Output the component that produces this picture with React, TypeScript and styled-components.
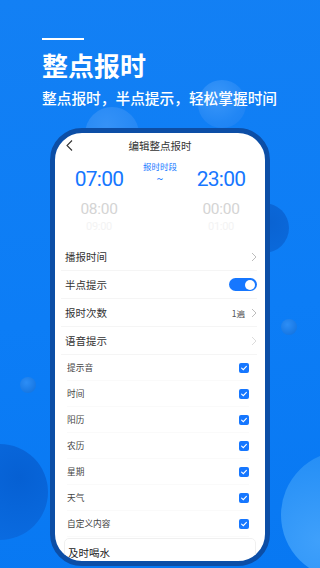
import React from 'react';
import styled, { createGlobalStyle } from 'styled-components';

const GlobalStyle = createGlobalStyle`
  html, body {
    margin: 0;
    padding: 0;
  }
  body {
    font-family: Roboto, "Noto Sans CJK SC", sans-serif;
  }
`;

const Page = styled.div`
  position: relative;
  width: 320px;
  height: 568px;
  overflow: hidden;
  background: linear-gradient(175deg, #1380f4 0%, #0c7df6 55%, #0878f2 100%);
  font-family: Roboto, "Noto Sans CJK SC", sans-serif;
`;

const Bubble = styled.div<{ $x: number; $y: number; $r: number; $tone: string }>`
  position: absolute;
  left: ${({ $x, $r }) => $x - $r}px;
  top: ${({ $y, $r }) => $y - $r}px;
  width: ${({ $r }) => $r * 2}px;
  height: ${({ $r }) => $r * 2}px;
  border-radius: 50%;
  background: ${({ $tone }) => $tone};
`;

const Intro = styled.header`
  position: relative;
  z-index: 1;
  padding: 38px 0 0 42px;
  color: #fff;
`;
const Rule = styled.div`
  width: 42px;
  height: 2px;
  background: #fff;
`;
const Headline = styled.h1`
  margin: 10px 0 0;
  font-family: "Noto Sans CJK SC", sans-serif;
  font-size: 26px;
  line-height: 30px;
  font-weight: 700;
`;
const Tagline = styled.p`
  margin: 8px 0 0;
  font-family: "Noto Sans CJK SC", sans-serif;
  font-size: 14.7px;
  line-height: 20px;
  font-weight: 500;
`;

const Phone = styled.div`
  position: relative;
  z-index: 1;
  box-sizing: border-box;
  margin: 20px 0 0 50px;
  width: 220px;
  height: 438px;
  border: 5px solid #0c4ea6;
  border-radius: 32px;
  background: #fff;
  overflow: hidden;
  display: flex;
  flex-direction: column;
`;

const NavBar = styled.div`
  display: grid;
  grid-template-columns: 30px 1fr 30px;
  align-items: center;
  height: 24px;
  flex-shrink: 0;
`;
const Back = styled.svg`
  margin-left: 11px;
`;
const NavTitle = styled.div`
  text-align: center;
  font-family: "Noto Sans CJK SC", sans-serif;
  font-size: 10.5px;
  color: #333;
`;

const Picker = styled.div`
  display: grid;
  grid-template-columns: 88px 34px 88px;
  padding-bottom: 9px;
  flex-shrink: 0;
`;
const Wheel = styled.div`
  display: flex;
  flex-direction: column;
  align-items: center;
  padding-top: 10px;
`;
const Middle = styled.div`
  display: flex;
  flex-direction: column;
  align-items: center;
  padding-top: 2px;
`;
const RangeLabel = styled.div`
  font-family: "Noto Sans CJK SC", sans-serif;
  font-size: 8.5px;
  line-height: 14px;
  color: #1677ff;
`;
const Tilde = styled.div`
  font-size: 10px;
  line-height: 12px;
  color: #1677ff;
`;
const Hour = styled.div<{ $level: 0 | 1 | 2 }>`
  font-family: Roboto, sans-serif;
  font-size: ${({ $level }) => ($level === 0 ? 21 : $level === 1 ? 15.5 : 11)}px;
  line-height: ${({ $level }) => ($level === 0 ? 24 : $level === 1 ? 22 : 14)}px;
  margin-top: ${({ $level }) => ($level === 1 ? 7 : 0)}px;
  letter-spacing: ${({ $level }) => ($level === 0 ? -0.8 : -0.3)}px;
  color: ${({ $level }) => ($level === 0 ? '#1677ff' : $level === 1 ? '#d4d4d4' : '#f3f3f3')};
`;

const List = styled.div`
  padding: 0 8px 0 6px;
`;
const Row = styled.div`
  box-sizing: border-box;
  height: 28px;
  padding-left: 4px;
  display: flex;
  align-items: center;
  justify-content: space-between;
  border-bottom: 1px solid #f5f5f5;
`;
const Label = styled.span`
  font-family: "Noto Sans CJK SC", sans-serif;
  font-size: 10.5px;
  color: #333;
`;
const Trail = styled.div`
  display: flex;
  align-items: center;
  gap: 6px;
`;
const Value = styled.span`
  font-family: "Noto Sans CJK SC", sans-serif;
  font-size: 8.5px;
  color: #555;
`;
const Switch = styled.div<{ $on: boolean }>`
  position: relative;
  width: 28px;
  height: 13px;
  border-radius: 7px;
  background: ${({ $on }) => ($on ? '#1677ff' : '#ddd')};
  &::after {
    content: '';
    position: absolute;
    top: 1.5px;
    ${({ $on }) => ($on ? 'right: 2px;' : 'left: 2px;')}
    width: 10px;
    height: 10px;
    border-radius: 50%;
    background: #fff;
  }
`;

const SubList = styled.div`
  padding: 0 16px 0 12px;
`;
const SubRow = styled.div`
  box-sizing: border-box;
  height: 26px;
  display: flex;
  align-items: center;
  justify-content: space-between;
  border-bottom: 1px solid #fafafa;
`;
const SubLabel = styled.span`
  font-family: "Noto Sans CJK SC", sans-serif;
  font-size: 8.7px;
  color: #444;
`;
const Box = styled.div`
  width: 10px;
  height: 10px;
  border-radius: 2px;
  background: #1677ff;
  display: flex;
  align-items: center;
  justify-content: center;
`;

const Card = styled.div`
  margin: 1px 9px 0 9px;
  padding: 6px 0 6px 3px;
  border: 1px solid #f0f0f0;
  border-radius: 5px;
`;
const CardTitle = styled.div`
  font-family: "Noto Sans CJK SC", sans-serif;
  font-size: 10.5px;
  line-height: 16px;
  color: #222;
`;

const Chevron = ({ faint }: { faint?: boolean }) => (
  <svg width="6" height="10" viewBox="0 0 6 10">
    <path d="M1 1 L5 5 L1 9" fill="none" stroke={faint ? '#dcdcdc' : '#bdbdbd'} strokeWidth="1" />
  </svg>
);

const Check = () => (
  <Box>
    <svg width="8" height="8" viewBox="0 0 8 8">
      <path d="M1.6 4.1 L3.3 5.7 L6.4 2.3" fill="none" stroke="#fff" strokeWidth="1.1" strokeLinecap="round" />
    </svg>
  </Box>
);

const bubbles = [
  { x: 222, y: 104, r: 24, tone: 'radial-gradient(circle at 40% 35%, #3b97f9 0%, #2287f5 60%, #1a80f3 100%)' },
  { x: 112, y: 134, r: 27, tone: 'radial-gradient(circle at 40% 35%, #3592f7 0%, #1d83f3 100%)' },
  { x: 264, y: 228, r: 25, tone: 'radial-gradient(circle at 60% 40%, #0a63d2 0%, #0b6cdf 100%)' },
  { x: 289, y: 327, r: 8, tone: 'radial-gradient(circle at 40% 35%, #2d8ef6 0%, #0f6fdc 100%)' },
  { x: 28, y: 385, r: 8, tone: 'radial-gradient(circle at 40% 35%, #2d8ef6 0%, #0f6fdc 100%)' },
  { x: 0, y: 492, r: 48, tone: 'radial-gradient(circle at 70% 35%, #0660d3 0%, #0a6be0 70%, #1a83f0 100%)' },
  { x: 345, y: 515, r: 64, tone: 'radial-gradient(circle at 30% 70%, #3fa0fb 0%, #2a92f7 55%, #1b86f4 100%)' },
];

const subItems = ['提示音', '时间', '阳历', '农历', '星期', '天气', '自定义内容'];

const App = () => (
  <Page>
    <GlobalStyle />
    {bubbles.map((b, i) => (
      <Bubble key={i} $x={b.x} $y={b.y} $r={b.r} $tone={b.tone} />
    ))}
    <Intro>
      <Rule />
      <Headline>整点报时</Headline>
      <Tagline>整点报时，半点提示，轻松掌握时间</Tagline>
    </Intro>
    <Phone>
      <NavBar>
        <Back width="7" height="11" viewBox="0 0 7 11">
          <path d="M6 0.5 L1 5.5 L6 10.5" fill="none" stroke="#333" strokeWidth="1.1" />
        </Back>
        <NavTitle>编辑整点报时</NavTitle>
        <span />
      </NavBar>
      <Picker>
        <Wheel>
          <Hour $level={0}>07:00</Hour>
          <Hour $level={1}>08:00</Hour>
          <Hour $level={2}>09:00</Hour>
        </Wheel>
        <Middle>
          <RangeLabel>报时时段</RangeLabel>
          <Tilde>~</Tilde>
        </Middle>
        <Wheel>
          <Hour $level={0}>23:00</Hour>
          <Hour $level={1}>00:00</Hour>
          <Hour $level={2}>01:00</Hour>
        </Wheel>
      </Picker>
      <List>
        <Row>
          <Label>播报时间</Label>
          <Chevron />
        </Row>
        <Row>
          <Label>半点提示</Label>
          <Switch $on />
        </Row>
        <Row>
          <Label>报时次数</Label>
          <Trail>
            <Value>1遍</Value>
            <Chevron />
          </Trail>
        </Row>
        <Row>
          <Label>语音提示</Label>
          <Chevron faint />
        </Row>
      </List>
      <SubList>
        {subItems.map((s) => (
          <SubRow key={s}>
            <SubLabel>{s}</SubLabel>
            <Check />
          </SubRow>
        ))}
      </SubList>
      <Card>
        <CardTitle>及时喝水</CardTitle>
      </Card>
    </Phone>
  </Page>
);

export default App;
